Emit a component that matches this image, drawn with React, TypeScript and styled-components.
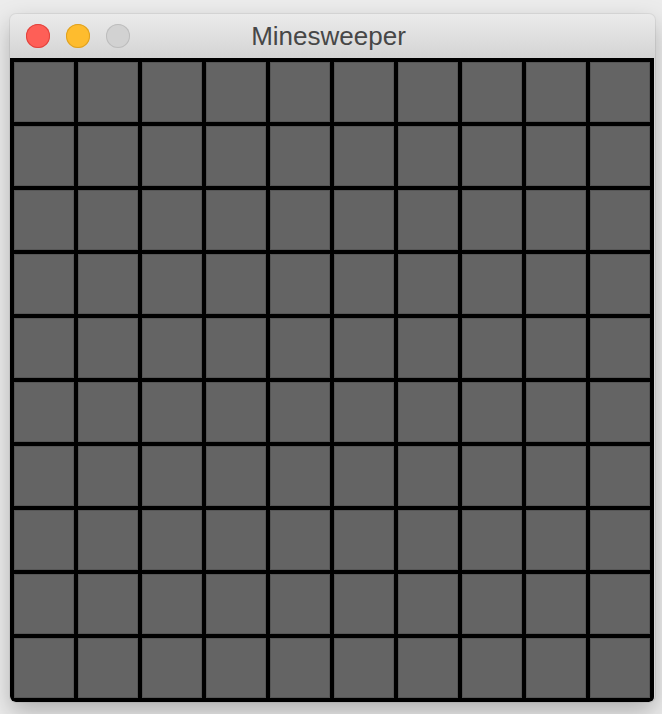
import React from "react";
import styled, { createGlobalStyle } from "styled-components";

const Global = createGlobalStyle`
  html, body { margin: 0; padding: 0; }
  body {
    background: #ececec;
    font-family: "Liberation Sans", Arial, sans-serif;
  }
`;

const Page = styled.div`
  padding: 14px 0 0 10px;
  min-height: 700px;
`;

const Window = styled.div`
  width: 645px;
  display: flex;
  flex-direction: column;
  border-radius: 6px;
  background: #d6d6d6;
  box-shadow: 0 10px 24px rgba(0, 0, 0, 0.26), 0 0 0 1px rgba(0, 0, 0, 0.06);
  overflow: hidden;
`;

const TitleBar = styled.div`
  position: relative;
  height: 44px;
  display: flex;
  align-items: center;
  padding-left: 16px;
  gap: 16px;
  background: linear-gradient(#ebebeb, #d4d4d4);
  box-sizing: border-box;
`;

const Light = styled.span<{ $color: string; $border: string }>`
  width: 24px;
  height: 24px;
  border-radius: 50%;
  background: ${(p) => p.$color};
  box-shadow: inset 0 0 0 1px ${(p) => p.$border};
  box-sizing: border-box;
`;

const Title = styled.div`
  position: absolute;
  left: 0;
  right: 8px;
  top: 0;
  bottom: 0;
  display: flex;
  align-items: center;
  justify-content: center;
  font-size: 26px;
  color: #474747;
  pointer-events: none;
`;

const Board = styled.div`
  display: grid;
  grid-template-columns: repeat(10, 60px);
  grid-auto-rows: 60px;
  gap: 4px;
  padding: 4px;
  width: 644px;
  box-sizing: border-box;
  background: #000;
  border-radius: 0 0 5px 5px;
`;

const Cell = styled.div`
  background: #646464;
  box-shadow: inset 0 0 0 1px #565656;
`;

export default function App() {
  const cells = Array.from({ length: 100 }, (_, i) => i);
  return (
    <>
      <Global />
      <Page>
        <Window>
          <TitleBar>
            <Light $color="#fe5f57" $border="#e0443e" />
            <Light $color="#febc2e" $border="#dea123" />
            <Light $color="#d2d2d2" $border="#bdbdbd" />
            <Title>Minesweeper</Title>
          </TitleBar>
          <Board>
            {cells.map((i) => (
              <Cell key={i} />
            ))}
          </Board>
        </Window>
      </Page>
    </>
  );
}
